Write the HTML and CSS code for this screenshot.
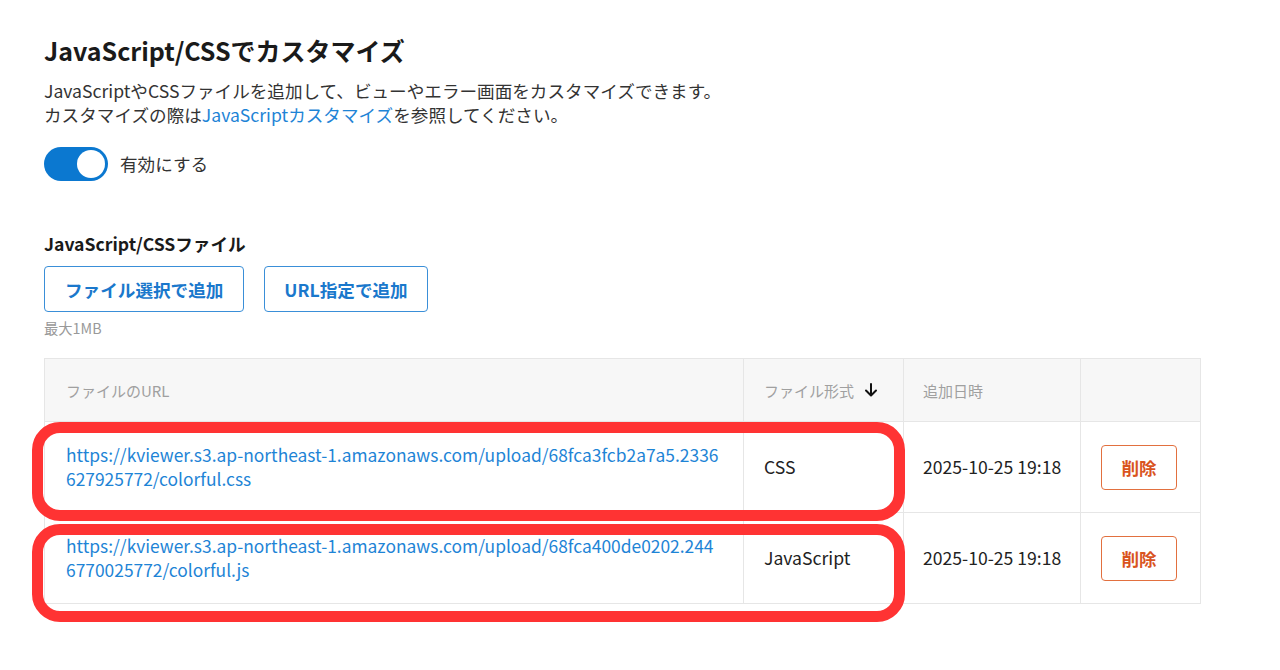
FILE: index.html
```html
<!DOCTYPE html>
<html lang="ja">
<head>
<meta charset="utf-8">
<title>JavaScript/CSSでカスタマイズ</title>
<link rel="stylesheet" href="styles.css">
</head>
<body>
<main class="page">
  <h1 class="title">JavaScript/CSSでカスタマイズ</h1>
  <p class="desc">JavaScriptやCSSファイルを追加して、ビューやエラー画面をカスタマイズできます。<br>カスタマイズの際は<a class="link" href="#">JavaScriptカスタマイズ</a>を参照してください。</p>
  <label class="toggle-row">
    <span class="toggle"><span class="knob"></span></span>
    <span class="toggle-label">有効にする</span>
  </label>

  <h2 class="subtitle">JavaScript/CSSファイル</h2>
  <div class="btns">
    <button class="btn">ファイル選択で追加</button>
    <button class="btn btn-url">URL指定で追加</button>
  </div>
  <p class="note">最大1MB</p>

  <div class="table-wrap">
    <table class="files">
      <colgroup>
        <col class="c-url"><col class="c-type"><col class="c-date"><col class="c-act">
      </colgroup>
      <thead>
        <tr>
          <th>ファイルのURL</th>
          <th><span class="sort">ファイル形式<svg class="arrow" width="16" height="16" viewBox="0 0 16 16"><path d="M8 2v11M3 8.5l5 5 5-5" fill="none" stroke="#111" stroke-width="2" stroke-linecap="round" stroke-linejoin="round"/></svg></span></th>
          <th>追加日時</th>
          <th></th>
        </tr>
      </thead>
      <tbody>
        <tr>
          <td><a class="url" href="#">https://kviewer.s3.ap-northeast-1.amazonaws.com/upload/68fca3fcb2a7a5.2336627925772/colorful.css</a></td>
          <td>CSS</td>
          <td>2025-10-25 19:18</td>
          <td><button class="del">削除</button></td>
        </tr>
        <tr>
          <td><a class="url" href="#">https://kviewer.s3.ap-northeast-1.amazonaws.com/upload/68fca400de0202.2446770025772/colorful.js</a></td>
          <td>JavaScript</td>
          <td>2025-10-25 19:18</td>
          <td><button class="del">削除</button></td>
        </tr>
      </tbody>
    </table>
    <div class="mark mark-1"></div>
    <div class="mark mark-2"></div>
  </div>
</main>
</body>
</html>
```
FILE: styles.css
```css
* { box-sizing: border-box; }
html, body { margin: 0; padding: 0; background: #fff; }
body {
  font-family: "Noto Sans CJK JP", "Noto Sans", sans-serif;
  color: #222;
  font-size: 17.6px;
}
.page {
  padding: 32px 0 66px 44px;
  width: 1220px;
  min-height: 670px;
}
.title {
  margin: 0;
  font-size: 25px;
  line-height: 36px;
  font-weight: 700;
  color: #1a1a1a;
}
.desc {
  margin: 11px 0 0;
  font-size: 17.6px;
  line-height: 24px;
  color: #333;
}
.link { color: #1e84d6; text-decoration: none; }
.toggle-row {
  margin-top: 20px;
  display: flex;
  align-items: center;
  gap: 12px;
  height: 34px;
}
.toggle {
  width: 64px;
  height: 34px;
  border-radius: 17px;
  background: #0b78d0;
  display: flex;
  align-items: center;
  justify-content: flex-end;
  padding: 3px;
}
.knob {
  width: 28px;
  height: 28px;
  border-radius: 50%;
  background: #fff;
}
.toggle-label { font-size: 17.6px; color: #333; line-height: 24px; }
.subtitle {
  margin: 51px 0 0;
  font-size: 17.6px;
  line-height: 24px;
  font-weight: 700;
  color: #1a1a1a;
}
.btns {
  margin-top: 10px;
  display: flex;
  gap: 20px;
}
.btn {
  font-family: inherit;
  height: 46px;
  padding: 0 20px;
  background: #fff;
  border: 1px solid #3a8fd8;
  border-radius: 4px;
  color: #1a78cc;
  font-size: 17.6px;
  font-weight: 700;
}
.btn-url { padding: 0 19px; }
.note {
  margin: 7px 0 0;
  font-size: 14.3px;
  line-height: 18px;
  color: #999;
}
.table-wrap {
  position: relative;
  margin-top: 21px;
  width: 1156px;
}
.files {
  width: 1156px;
  border-collapse: collapse;
  table-layout: fixed;
}
.c-url { width: 699px; }
.c-type { width: 160px; }
.c-date { width: 177px; }
.c-act { width: 120px; }
.files th, .files td {
  border: 1px solid #e6e6e6;
  text-align: left;
  vertical-align: middle;
  padding: 0 20px;
}
.files th:first-child, .files td:first-child { padding: 0 20px 0 21px; }
.files th:nth-child(3), .files td:nth-child(3) { padding: 0 10px 0 19px; }
.files thead tr { height: 63px; background: #f7f7f7; }
.files th {
  font-weight: 400;
  font-size: 15px;
  color: #a0a0a0;
}
.sort { display: inline-flex; align-items: center; gap: 9px; }
.arrow { display: block; }
.files tbody tr { height: 91px; }
.files td {
  font-size: 17.6px;
  line-height: 24px;
  color: #222;
}
.url {
  color: #1e84d6;
  text-decoration: none;
  word-break: break-all;
  display: block;
  font-size: 17.4px;
}
.files td:last-child { padding: 0 0 0 20px; }
.del {
  font-family: inherit;
  width: 76px;
  height: 45px;
  background: #fff;
  border: 1px solid #e2703f;
  border-radius: 4px;
  color: #d9541e;
  font-size: 17.6px;
  font-weight: 700;
}
.mark {
  position: absolute;
  left: -12px;
  width: 873px;
  border: 11px solid #ff3333;
  border-radius: 28px;
  pointer-events: none;
}
.mark-1 { top: 64px; height: 99px; }
.mark-2 { top: 166px; height: 98px; }
```
